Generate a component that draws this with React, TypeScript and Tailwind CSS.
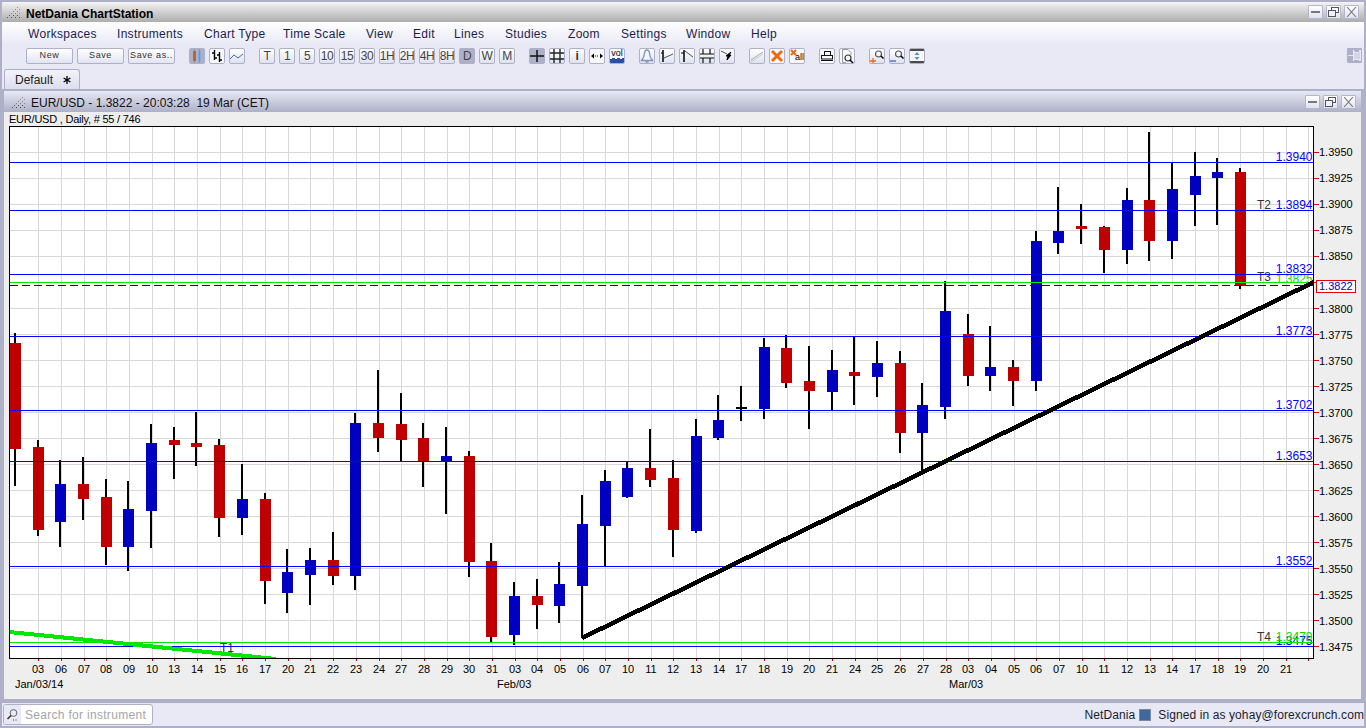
import React from "react";

type Candle = [number, number, number, number, number, string];
const candles: Candle[] = [
  [15,333,486,343,449,"r"],[38,440,536,447,530,"r"],[60,460,547,484,522,"b"],[83,457,520,484,499,"r"],
  [106,479,565,497,547,"r"],[128,481,571,509,547,"b"],[151,424,548,443,511,"b"],[174,427,479,440,445,"r"],
  [196,412,466,443,447,"r"],[219,439,537,445,518,"r"],[242,464,535,499,518,"b"],[265,493,604,499,581,"r"],
  [287,549,613,572,593,"b"],[310,548,605,560,575,"b"],[333,532,585,560,576,"r"],[355,413,590,423,576,"b"],
  [378,370,452,423,438,"r"],[401,393,461,424,440,"r"],[423,423,487,438,461,"r"],[446,427,514,456,461,"b"],
  [469,451,577,456,562,"r"],[491,543,642,561,637,"r"],[514,582,645,596,635,"b"],[537,579,629,596,605,"r"],
  [559,562,623,584,606,"b"],[582,495,638,524,586,"b"],[605,470,566,481,526,"b"],[627,462,498,468,497,"b"],
  [650,429,487,468,480,"r"],[673,460,557,478,530,"r"],[696,419,533,436,531,"b"],[718,395,440,420,438,"b"],
  [741,386,421,407,409,"k"],[764,338,419,347,409,"b"],[786,335,388,348,383,"r"],[809,346,429,381,391,"r"],
  [832,350,410,370,392,"b"],[854,337,405,372,376,"r"],[877,341,397,363,377,"b"],[900,351,453,363,433,"r"],
  [922,383,470,405,433,"b"],[945,281,419,311,407,"b"],[968,314,386,334,376,"r"],[990,326,391,367,376,"b"],
  [1013,360,406,367,381,"r"],[1036,231,391,241,381,"b"],[1058,187,254,231,243,"b"],[1081,204,244,226,229,"r"],
  [1104,226,273,227,250,"r"],[1127,188,264,200,250,"b"],[1149,132,261,200,241,"r"],[1172,163,259,189,241,"b"],
  [1195,152,226,176,195,"b"],[1217,158,225,172,178,"b"],[1240,168,289,172,286,"r"],
];
const colours: Record<string, string> = { r: "#c00000", b: "#0000c0", k: "#000000" };
const dayLabels = "03 06 07 08 09 10 13 14 15 16 17 20 21 22 23 24 27 28 29 30 31 03 04 05 06 07 10 11 12 13 14 17 18 19 20 21 24 25 26 27 28 03 04 05 06 07 10 11 12 13 14 17 18 19 20 21".split(" ");
const gridX = Array.from({ length: 57 }, (_, i) => Math.round(38.3 + 22.68 * i));
const gridY = Array.from({ length: 20 }, (_, i) => 152 + 26 * i);
const prices = Array.from({ length: 20 }, (_, i) => (1.395 - 0.0025 * i).toFixed(4));
const blueLines: [number, string][] = [[162,"1.3940"],[210,"1.3894"],[274,"1.3832"],[336,"1.3773"],[410,"1.3702"],[461,"1.3653"],[566,"1.3552"],[646,"1.3475"]];

function Chart() {
  return (
    <svg width={1357} height={573} viewBox="4 126 1357 573" className="block" fontFamily="'Liberation Sans', Arial, sans-serif">
      <defs>
        <clipPath id="plot"><rect x={10} y={127} width={1303} height={531} /></clipPath>
      </defs>
      <rect x={9} y={126} width={1305} height={533} fill="#000" shapeRendering="crispEdges" />
      <rect x={10} y={127} width={1303} height={531} fill="#fff" shapeRendering="crispEdges" />
      <g shapeRendering="crispEdges">
        {gridX.map((x) => <rect key={x} x={x} y={127} width={1} height={531} fill="#d8d8d8" />)}
        {gridY.map((y) => <rect key={y} x={10} y={y} width={1303} height={1} fill="#d8d8d8" />)}
        {gridX.map((x) => <rect key={x} x={x} y={659} width={1} height={2} fill="#e00000" />)}
        {gridY.map((y) => <rect key={y} x={1314} y={y} width={5} height={1} fill="#e00000" />)}
      </g>
      <g clipPath="url(#plot)" shapeRendering="crispEdges">
        {candles.map(([x, hi, lo, top, bot, c]) => (
          <g key={x}>
            <rect x={x - 1} y={hi} width={2} height={lo - hi} fill="#000" />
            <rect x={x - 5} y={top} width={11} height={bot - top} fill={colours[c]} />
          </g>
        ))}
      </g>
      <g fontSize={12} textAnchor="end" fill="#0000ff">
        {blueLines.map(([y, t]) => <text key={t} x={1312.5} y={y - 1}>{t}</text>)}
        <text x={1312.5} y={283} fill="#00e000">1.3825</text>
        <text x={1312.5} y={641} fill="#00e000">1.3479</text>
      </g>
      <g fontSize={12} fill="#333">
        <text x={1257} y={209}>T2</text>
        <text x={1257} y={281}>T3</text>
        <text x={1257} y={641}>T4</text>
        <text x={220} y={652}>T1</text>
      </g>
      <g clipPath="url(#plot)" shapeRendering="crispEdges">
        {blueLines.map(([y]) => <rect key={y} x={10} y={y} width={1303} height={1} fill="#0000ff" />)}
        <rect x={10} y={282} width={1303} height={1} fill="#00e600" />
        <rect x={10} y={642} width={1303} height={1} fill="#00e600" />
        <line x1={10} y1={285.5} x2={1313} y2={285.5} stroke="#0000c0" strokeWidth={1} strokeDasharray="8 4" />
        <line x1={9} y1={632} x2={276} y2={659} stroke="#00e800" strokeWidth={4} />
        <line x1={582} y1={638} x2={1314} y2={282} stroke="#000" strokeWidth={4.5} />
      </g>
      <g fontSize={11} fill="#000">
        {prices.map((p, i) => (i === 5 ? null : <text key={p} x={1319} y={gridY[i] + (i > 5 ? 5 : 4)}>{p}</text>))}
        {dayLabels.map((d, i) => <text key={i} x={gridX[i]} y={673} textAnchor="middle">{d}</text>)}
        <text x={15} y={688}>Jan/03/14</text>
        <text x={497} y={688}>Feb/03</text>
        <text x={949} y={688}>Mar/03</text>
      </g>
      <rect x={1316.5} y={280.5} width={39} height={12} fill="#fff" stroke="#e00000" shapeRendering="crispEdges" />
      <text x={1319} y={290} fontSize={11} fill="#0000c0">1.3822</text>
    </svg>
  );
}

function Grip() {
  const dots: React.ReactNode[] = [];
  for (let r = 0; r < 6; r++) {
    for (let c = 0; c < 8; c++) {
      if ((r + c) % 2 === 0 && c >= 5 - r) dots.push(<rect key={`${r}-${c}`} x={c * 2} y={r * 2} width={1} height={1} fill={r > 3 ? "#555" : "#888"} />);
    }
  }
  return <svg width={15} height={12} viewBox="0 0 15 12" shapeRendering="crispEdges" className="shrink-0 mt-[2px]">{dots}</svg>;
}

function WinControls() {
  const cls = "w-[15px] h-[14px] rounded-[1px] border border-[#b4b6cc] bg-linear-to-b from-[#ffffff] to-[#e0e2f0] flex items-center justify-center";
  return (
    <div className="flex gap-[3px]">
      <div className={cls}><svg width={11} height={10} viewBox="0 0 11 10"><rect x={1} y={4} width={9} height={2} fill="#777" /></svg></div>
      <div className={cls}><svg width={11} height={10} viewBox="0 0 11 10" fill="none" stroke="#555" shapeRendering="crispEdges"><rect x={3.5} y={0.5} width={7} height={5} /><rect x={0.5} y={3.5} width={7} height={6} fill="#eef" /></svg></div>
      <div className={cls}><svg width={11} height={10} viewBox="0 0 11 10" stroke="#777" strokeWidth={1.1}><path d="M1 0L10 10M10 0L1 10" /></svg></div>
    </div>
  );
}

function Btn({ on, w, children }: { on?: boolean; w?: boolean; children?: React.ReactNode }) {
  return (
    <div className={`w-4 h-4 shrink-0 rounded-[2px] border border-[#aeb0c8] flex items-center justify-center overflow-hidden text-[12px] leading-none tracking-[-0.5px] text-[#444] ${on ? "bg-[#aeb0c8]" : w ? "bg-[#f8f8fc]" : "bg-linear-to-b from-[#ffffff] to-[#dfe1ef]"}`}>
      {children}
    </div>
  );
}

const Ic = ({ children }: { children: React.ReactNode }) => (
  <svg width={14} height={14} viewBox="0 0 14 14" fill="none">{children}</svg>
);

function TextButton({ label, w }: { label: string; w: string }) {
  return (
    <div className={`${w} h-[16px] rounded-[2px] border border-[#aeb0c8] bg-linear-to-b from-[#ffffff] to-[#e2e4f2] flex items-center justify-center text-[9px] tracking-[0.6px] text-[#333]`}>{label}</div>
  );
}

const menus: [string, string][] = [
  ["Workspaces", "w-[89px]"], ["Instruments", "w-[87px]"], ["Chart Type", "w-[79px]"], ["Time Scale", "w-[83px]"],
  ["View", "w-[47px]"], ["Edit", "w-[41px]"], ["Lines", "w-[51px]"], ["Studies", "w-[63px]"],
  ["Zoom", "w-[53px]"], ["Settings", "w-[65px]"], ["Window", "w-[65px]"], ["Help", "w-[50px]"],
];

export default function App() {
  return (
    <div className="w-[1366px] h-[728px] overflow-hidden bg-[#aeb0c8] flex flex-col pt-[2px] pb-[2px] px-[3px] font-['Liberation_Sans',Arial,sans-serif]">
      {/* application title */}
      <div className="h-[20px] -mx-[1px] shrink-0 flex items-center bg-linear-to-b from-[#f4f4f4] to-[#adadad] pl-[3px] pr-[5px]">
        <Grip />
        <span className="ml-[6px] mt-[3px] text-[12px] font-bold text-black">NetDania ChartStation</span>
        <div className="ml-auto"><WinControls /></div>
      </div>
      {/* menu */}
      <div className="h-[23px] -mx-[1px] shrink-0 flex items-center pl-[26px] bg-linear-to-b from-[#ffffff] to-[#e8e9f5] text-[12px] tracking-[0.3px] text-[#1c1c50]">
        {menus.map(([m, w]) => <div key={m} className={w}>{m}</div>)}
      </div>
      {/* toolbar */}
      <div className="h-[22px] -mx-[1px] shrink-0 flex items-center pl-[24px] pr-[2px] bg-[#e8e9f5]">
        <div className="flex gap-[4px]">
          <TextButton label="New" w="w-[47px]" />
          <TextButton label="Save" w="w-[47px]" />
          <TextButton label="Save as.." w="w-[47px]" />
        </div>
        <div className="flex gap-[4px] ml-[14px]">
          <Btn on><Ic><rect x={3} y={2} width={3} height={10} fill="#e85a10" /><rect x={8} y={2} width={3} height={10} fill="#7fb0e0" /><path d="M4.5 0V14M9.5 0V14" stroke="#666" strokeWidth={0.8} opacity={0.5} /></Ic></Btn>
          <Btn w><Ic><path d="M4.5 1V11M9.5 3V13M2 4H4.5M4.5 9H7M7 6H9.5M9.5 11H12" stroke="#000" strokeWidth={1.4} /></Ic></Btn>
          <Btn><Ic><path d="M0 10L4 6L8 9L13 5" stroke="#3a6fc0" /></Ic></Btn>
        </div>
        <div className="flex gap-[4px] ml-[14px]">
          {["T", "1", "5", "10", "15", "30", "1H", "2H", "4H", "8H"].map((t) => <Btn key={t}>{t}</Btn>)}
          <Btn on>D</Btn>
          <Btn>W</Btn>
          <Btn>M</Btn>
        </div>
        <div className="flex gap-[4px] ml-[14px]">
          <Btn on><Ic><path d="M7 1V13M0 7H14" stroke="#111" strokeWidth={1.5} /></Ic></Btn>
          <Btn><Ic><path d="M4 0V14M10 0V14M0 4H14M0 10H14" stroke="#222" strokeWidth={1.4} /></Ic></Btn>
          <Btn><span className="text-[12px] font-bold text-[#333]">i</span></Btn>
          <Btn w><Ic><path d="M5 7H9" stroke="#000" strokeDasharray="1 1" /><path d="M1 7L4 4.5V9.5ZM13 7L10 4.5V9.5Z" fill="#000" /></Ic></Btn>
          <Btn w>
            <div className="flex flex-col items-center">
              <span className="text-[9px] leading-[9px] tracking-normal text-black">vol</span>
              <svg width={14} height={5} viewBox="0 0 14 5" shapeRendering="crispEdges"><path d="M0 1H2V0H5V1H7V0H10V1H12V0H14V5H0Z" fill="#2a4fa8" /></svg>
            </div>
          </Btn>
        </div>
        <div className="flex gap-[4px] ml-[14px]">
          <Btn><Ic><g fill="#f4f6ff" stroke="#7f93b8" strokeWidth={1.3}><path d="M7 1C4.5 1 4.5 3 4.2 6C4 9 2.5 10 1.5 11.5H12.5C11.5 10 10 9 9.8 6C9.5 3 9.5 1 7 1Z" /><path d="M5.5 13H8.5" /></g></Ic></Btn>
          <Btn><Ic><path d="M3 1V13" stroke="#000" strokeWidth={1.5} /><path d="M4 9L13 5" stroke="#555" /><path d="M1 4H3" stroke="#000" /></Ic></Btn>
          <Btn><Ic><path d="M4 1V13" stroke="#000" strokeWidth={1.5} /><path d="M5 2L13 8" stroke="#555" /><path d="M1 4H4" stroke="#000" /></Ic></Btn>
          <Btn><Ic><path d="M3 0V5M3 9V14M10 0V5M10 9V14M0 5H14M0 9H14" stroke="#111" strokeWidth={1.2} /></Ic></Btn>
          <Btn><Ic><path d="M1 2L7 5" stroke="#555" /><path d="M11 3L9 6H11L7 11L8 7H6Z" fill="#000" stroke="#000" /></Ic></Btn>
        </div>
        <div className="flex gap-[4px] ml-[14px]">
          <Btn><Ic><path d="M1 11L13 3" stroke="#aaa" /><path d="M1 13L13 5" stroke="#ccc" /></Ic></Btn>
          <Btn w><Ic><path d="M2 2L12 12M12 2L2 12" stroke="#f06a10" strokeWidth={3} /></Ic></Btn>
          <Btn w>
            <div className="relative w-full h-full">
              <svg width={7} height={7} viewBox="0 0 7 7" className="absolute left-0 top-0"><path d="M1 1L6 6M6 1L1 6" stroke="#f06a10" strokeWidth={2} /></svg>
              <span className="absolute right-0 bottom-[1px] text-[9px] leading-[9px] tracking-normal text-black">all</span>
            </div>
          </Btn>
        </div>
        <div className="flex gap-[4px] ml-[14px]">
          <Btn w><Ic><rect x={4.5} y={2.5} width={6} height={4} stroke="#111" /><rect x={1.5} y={6.5} width={11} height={3.5} stroke="#111" /><path d="M1 11.5H13" stroke="#111" strokeWidth={1.2} /></Ic></Btn>
          <Btn w><Ic><path d="M2.5 0.5H8L11 3.5V6M2.5 0.5V13.5H6" stroke="#999" /><circle cx={8} cy={9} r={3} stroke="#333" strokeWidth={1.2} /><path d="M10 11L13 14" stroke="#000" strokeWidth={1.5} /></Ic></Btn>
        </div>
        <div className="flex gap-[4px] ml-[14px]">
          <Btn><Ic><circle cx={8.5} cy={5} r={3} stroke="#555" strokeWidth={1.2} /><path d="M11 7L13.5 9.5" stroke="#000" strokeWidth={1.5} /><path d="M0 12H6M3 9V14" stroke="#f06a10" strokeWidth={1.3} /></Ic></Btn>
          <Btn><Ic><circle cx={8.5} cy={5} r={3} stroke="#555" strokeWidth={1.2} /><path d="M11 7L13.5 9.5" stroke="#000" strokeWidth={1.5} /><path d="M0 12H6" stroke="#4a80c8" strokeWidth={1.3} /></Ic></Btn>
          <Btn w><Ic><path d="M0 1H14M0 13H14" stroke="#111" strokeWidth={1.5} /><path d="M7 3L4.5 6H9.5ZM7 11L4.5 8H9.5Z" fill="#5a8ac8" /></Ic></Btn>
        </div>
        <div className="ml-auto -mt-[1px] w-[15px] h-[15px] bg-[#aeb0c8] rounded-[1px] flex items-center justify-center">
          <svg width={13} height={13} viewBox="0 0 13 13" fill="none" shapeRendering="crispEdges"><path d="M0 6H5" stroke="#e8e9f5" /><path d="M5 1L7 3H11L12 1V12L11 10H7L5 12Z" fill="#d4d6e6" stroke="#e8e9f5" /></svg>
        </div>
      </div>
      {/* tabs */}
      <div className="h-[22px] -mx-[1px] shrink-0 flex items-end bg-[#e8e9f5] px-[2px]">
        <div className="w-[76px] h-[20px] rounded-t-[3px] border border-b-0 border-[#aeb0c8] bg-linear-to-b from-[#f2f3fa] to-[#dcdeee] flex items-center pl-[10px] text-[12px] text-[#222]">
          <span>Default</span>
          <svg width={8} height={8} viewBox="0 0 8 8" className="ml-[10px]" stroke="#000" strokeWidth={1.3}><path d="M4 0V8M0.6 2L7.4 6M7.4 2L0.6 6" /></svg>
        </div>
      </div>
      {/* chart window */}
      <div className="mt-[2px] ml-[1px] mr-[-1px] w-[1357px] flex flex-col bg-[#eeeeee]">
        <div className="h-[21px] shrink-0 flex items-center bg-linear-to-b from-[#e8e9f5] to-[#aeb0c8] pl-[6px] pr-[5px]">
          <Grip />
          <span className="ml-[6px] mt-[3px] text-[12px] text-[#111] whitespace-pre">EUR/USD - 1.3822 - 20:03:28  19 Mar (CET)</span>
          <div className="ml-auto"><WinControls /></div>
        </div>
        <div className="h-[14px] shrink-0 flex items-center pl-[5px] text-[11px] tracking-[-0.22px] text-black">EUR/USD , Daily, # 55 / 746</div>
        <Chart />
      </div>
      {/* status */}
      <div className="mt-[4px] -mx-[1px] h-[23px] shrink-0 flex items-center bg-[#e8e9f5] pl-[1px] text-[12px]">
        <div className="w-[150px] h-[21px] rounded-[3px] border border-[#aeb0c8] bg-white flex items-center overflow-hidden">
          <div className="w-[17px] h-full bg-[#e8e9f5] flex items-center justify-center">
            <svg width={13} height={13} viewBox="0 0 13 13" fill="none"><circle cx={7.5} cy={5} r={3.4} stroke="#666" /><path d="M5 7.5L1.5 11" stroke="#333" strokeWidth={1.6} /><path d="M7 12H8M9.5 12H10.5" stroke="#333" /></svg>
          </div>
          <span className="ml-[4px] tracking-[0.3px] text-[#a4a4a8]">Search for instrument</span>
        </div>
        <div className="ml-auto flex items-center tracking-[0.1px] text-[#1c1c30]">
          <span>NetDania</span>
          <div className="ml-[4px] w-[12px] h-[12px] bg-[#3d6a9c] border border-[#7a8aa4]" />
          <span className="ml-[7px]">Signed in as yohay@forexcrunch.com</span>
        </div>
      </div>
    </div>
  );
}
